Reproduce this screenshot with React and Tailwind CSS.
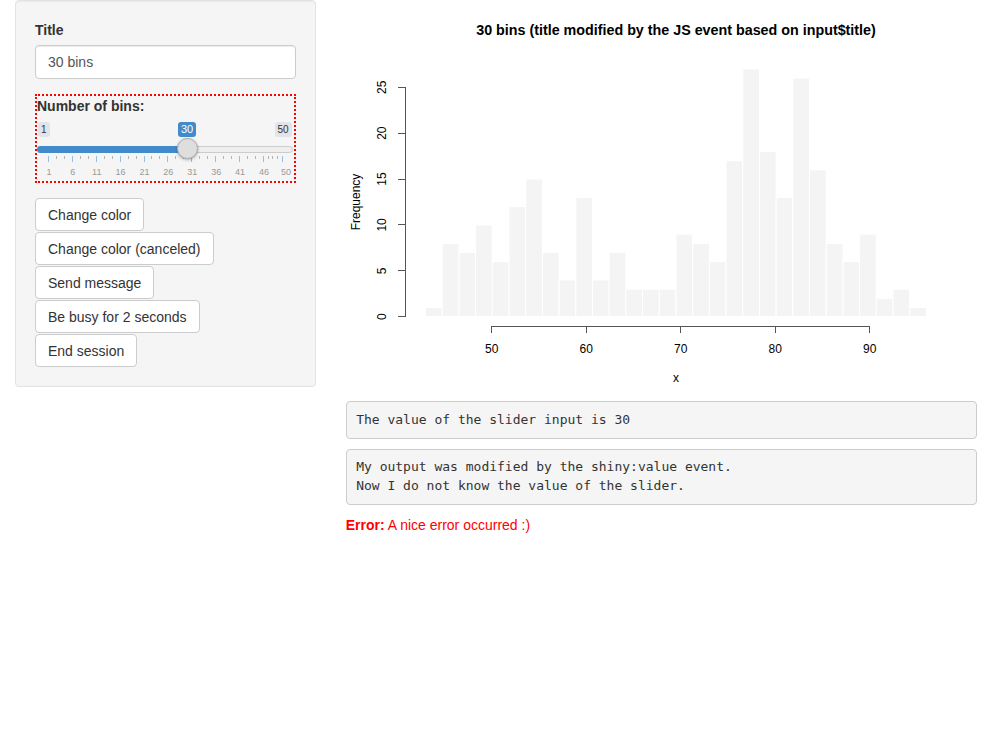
import React from "react";

const counts = [1, 8, 7, 10, 6, 12, 15, 7, 4, 13, 4, 7, 3, 3, 3, 9, 8, 6, 17, 27, 18, 13, 26, 16, 8, 6, 9, 2, 3, 1];
const OX = 346;
const px = (v) => 491.7 - OX + (v - 50) * 9.45;
const py = (c) => 316.7 - c * 9.176;

function Histogram() {
  const bw = 53 / 30;
  return (
    <svg width="631" height="400" viewBox="0 0 631 400" className="block" style={{ fontFamily: '"Liberation Sans", Arial, sans-serif' }}>
      <text x={330} y={35} textAnchor="middle" fontWeight="bold" fontSize="14.3" fill="#000">
        30 bins (title modified by the JS event based on input$title)
      </text>
      {counts.map((c, i) => {
        const x0 = px(43 + i * bw);
        const x1 = px(43 + (i + 1) * bw);
        return (
          <rect key={i} x={x0} y={py(c)} width={x1 - x0} height={py(0) - py(c)} fill="#f4f4f4" stroke="#ffffff" strokeWidth="1" />
        );
      })}
      <g stroke="#555" strokeWidth="1" shapeRendering="crispEdges">
        <line x1={405 - OX} y1={py(0)} x2={405 - OX} y2={py(25)} />
        {[0, 5, 10, 15, 20, 25].map((v) => (
          <line key={v} x1={398 - OX} y1={py(v)} x2={405 - OX} y2={py(v)} />
        ))}
        <line x1={px(50)} y1={326} x2={px(90)} y2={326} />
        {[50, 60, 70, 80, 90].map((v) => (
          <line key={v} x1={px(v)} y1={326} x2={px(v)} y2={333} />
        ))}
      </g>
      {[0, 5, 10, 15, 20, 25].map((v) => (
        <text key={v} x={0} y={0} fontSize="12" fill="#000" textAnchor="middle" transform={`translate(${386 - OX} ${py(v)}) rotate(-90)`}>
          {v}
        </text>
      ))}
      <text x={0} y={0} fontSize="12" fill="#000" textAnchor="middle" transform={`translate(${360 - OX} 202) rotate(-90)`}>
        Frequency
      </text>
      {[50, 60, 70, 80, 90].map((v) => (
        <text key={v} x={px(v)} y={353} fontSize="12" fill="#000" textAnchor="middle">
          {v}
        </text>
      ))}
      <text x={330} y={382} fontSize="12" fill="#000" textAnchor="middle">
        x
      </text>
    </svg>
  );
}

function Slider() {
  const gx = (v) => 11 + (v - 1) * (234 / 49);
  const majors = [1, 6, 11, 16, 21, 26, 31, 36, 41, 46, 50];
  const minors = [];
  for (let a = 1; a < 46; a += 5) minors.push(a + 5 / 3, a + 10 / 3);
  minors.push(47, 48, 49);
  return (
    <div className="relative h-[65px]">
      {/* min / max / value badges */}
      <div className="absolute left-[1px] top-[6px] h-[15px] px-[3px] rounded-[3px] bg-[#e1e4e9] text-[10px] leading-[15px] text-[#333]">1</div>
      <div className="absolute right-[2px] top-[6px] h-[15px] px-[3px] rounded-[3px] bg-[#e1e4e9] text-[10px] leading-[15px] text-[#333]">50</div>
      <div className="absolute left-[141px] top-[6px] h-[15px] w-[18px] rounded-[3px] bg-[#428bca] text-center text-[11px] leading-[15px] text-white">30</div>
      {/* track */}
      <div className="absolute left-0 right-[1px] top-[30px] h-[7px] rounded-[4px] border border-[#cccccc] bg-[#eeeeee]"></div>
      <div className="absolute left-0 top-[30px] h-[7px] w-[150px] rounded-l-[4px] bg-[#428bca]"></div>
      {/* grid */}
      {minors.map((v) => (
        <div key={v} className="absolute top-[40px] h-[3px] w-px bg-[#b5b5b5]" style={{ left: gx(v) }}></div>
      ))}
      {majors.map((v) => (
        <div key={v} className="absolute top-[40px] h-[6px] w-px bg-[#95bde2]" style={{ left: gx(v) }}></div>
      ))}
      {/* handle */}
      <div className="absolute left-[140px] top-[22px] h-[21px] w-[21px] rounded-full border border-[#ababab] bg-[#dedede] shadow-[0_1px_3px_rgba(0,0,0,0.3)]"></div>
      {/* tick labels */}
      {majors.map((v, i) => (
        <div
          key={v}
          className="absolute top-[51px] w-[20px] -ml-[10px] text-center text-[9px] leading-[10px] text-[#999]"
          style={{ left: gx(v) + 1 + (i === majors.length - 1 ? 3 : 0) }}
        >
          {v}
        </div>
      ))}
    </div>
  );
}

const buttons = ["Change color", "Change color (canceled)", "Send message", "Be busy for 2 seconds", "End session"];

export default function App() {
  return (
    <div className="flex w-[992px] bg-white text-[14px] leading-[20px] text-[#333]" style={{ fontFamily: '"Liberation Sans", Arial, sans-serif' }}>
      <div className="w-1/3 shrink-0 px-[15px]">
        <div className="rounded-[4px] border border-[#e3e3e3] bg-[#f5f5f5] p-[19px] shadow-[inset_0_1px_1px_rgba(0,0,0,0.05)]">
          <div className="mb-[15px]">
            <div className="mb-[5px] font-bold">Title</div>
            <div className="flex h-[34px] items-center rounded-[4px] border border-[#cccccc] bg-white px-[12px] text-[#555] shadow-[inset_0_1px_1px_rgba(0,0,0,0.075)]">
              30 bins
            </div>
          </div>
          <div className="mb-[15px] h-[89px] border-2 border-dotted border-[#ff0000]">
            <div className="font-bold">Number of bins:</div>
            <Slider />
          </div>
          <div className="flex flex-col items-start gap-px">
            {buttons.map((b) => (
              <div key={b} className="flex h-[33px] items-center rounded-[4px] border border-[#cccccc] bg-white px-[12px] text-[#333]">
                {b}
              </div>
            ))}
          </div>
        </div>
      </div>
      <div className="w-2/3 shrink-0 px-[15px]">
        <div className="h-[400px]">
          <Histogram />
        </div>
        <pre
          className="mb-[10px] mt-px rounded-[4px] border border-[#cccccc] bg-[#f5f5f5] px-[9.5px] py-[8.5px] text-[13px] leading-[18.57px] text-[#333]"
          style={{ fontFamily: '"DejaVu Sans Mono", Menlo, monospace' }}
        >
          The value of the slider input is 30
        </pre>
        <pre
          className="mb-[10px] rounded-[4px] border border-[#cccccc] bg-[#f5f5f5] px-[9.5px] py-[8.5px] text-[13px] leading-[18.57px] text-[#333]"
          style={{ fontFamily: '"DejaVu Sans Mono", Menlo, monospace' }}
        >
          {"My output was modified by the shiny:value event.\nNow I do not know the value of the slider."}
        </pre>
        <div className="text-[#ff0000]">
          <span className="font-bold">Error:</span> A nice error occurred :)
        </div>
      </div>
    </div>
  );
}
